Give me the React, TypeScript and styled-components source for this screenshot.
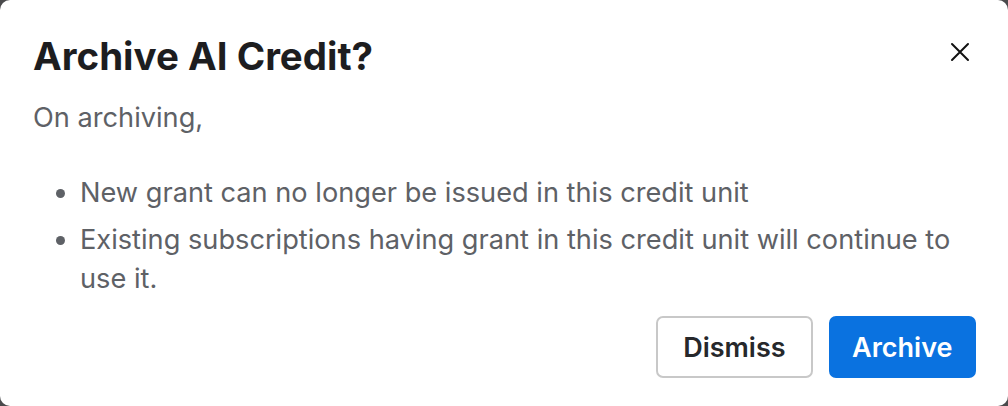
import { createGlobalStyle, styled } from "styled-components";

const GlobalStyle = createGlobalStyle`
    html, body {
        margin: 0;
        padding: 0;
        background: #4a4a4c;
    }
    body {
        font-family: Inter, "Noto Sans", sans-serif;
        -webkit-font-smoothing: antialiased;
    }
`

const Dialog = styled.div`
    box-sizing: border-box;
    width: 1008px;
    height: 406px;
    background: #ffffff;
    border-radius: 10px;
    padding: 32px 32px 28px 33px;
    display: flex;
    flex-direction: column;
`

const Header = styled.div`
    display: flex;
    align-items: flex-start;
    justify-content: space-between;
`

const Title = styled.h2`
    margin: 0;
    font-size: 38.5px;
    line-height: 48px;
    font-weight: 700;
    color: #1d1d1f;
`

const CloseButton = styled.button`
    border: none;
    background: none;
    padding: 0;
    margin: 10px 6px 0 0;
    width: 20px;
    height: 20px;
    display: flex;
    color: #111;
    cursor: pointer;
`

const Lead = styled.p`
    margin: 19px 0 0;
    font-size: 27.2px;
    line-height: 38px;
    color: #5e6166;
`

const List = styled.ul`
    margin: 36px 0 0;
    padding-left: 47px;
    font-size: 27.2px;
    line-height: 39px;
    color: #5e6166;
`

const Item = styled.li`
    & + & {
        margin-top: 8px;
    }
`

const Footer = styled.div`
    margin-top: auto;
    display: flex;
    justify-content: flex-end;
    gap: 16px;
`

const Button = styled.button<{ $primary?: boolean }>`
    height: 62px;
    padding: 0 ${p => (p.$primary ? "21.5px" : "25px")};
    border-radius: 7px;
    font-family: inherit;
    font-size: 27px;
    font-weight: 600;
    border: 2px solid ${p => (p.$primary ? "#0a72e0" : "#c8c8c8")};
    background: ${p => (p.$primary ? "#0a72e0" : "#ffffff")};
    color: ${p => (p.$primary ? "#ffffff" : "#26282b")};
    cursor: pointer;
`

export default function App() {
    return (
        <>
            <GlobalStyle/>
            <Dialog>
                <Header>
                    <Title>Archive AI Credit?</Title>
                    <CloseButton aria-label="Close">
                        <svg width="20" height="20" viewBox="0 0 20 20" fill="none" stroke="currentColor"
                             strokeWidth="2" strokeLinecap="round">
                            <path d="M2 2l16 16M18 2L2 18"/>
                        </svg>
                    </CloseButton>
                </Header>
                <Lead>On archiving,</Lead>
                <List>
                    <Item>New grant can no longer be issued in this credit unit</Item>
                    <Item>Existing subscriptions having grant in this credit unit will continue to use it.</Item>
                </List>
                <Footer>
                    <Button>Dismiss</Button>
                    <Button $primary>Archive</Button>
                </Footer>
            </Dialog>
        </>
    )
}
